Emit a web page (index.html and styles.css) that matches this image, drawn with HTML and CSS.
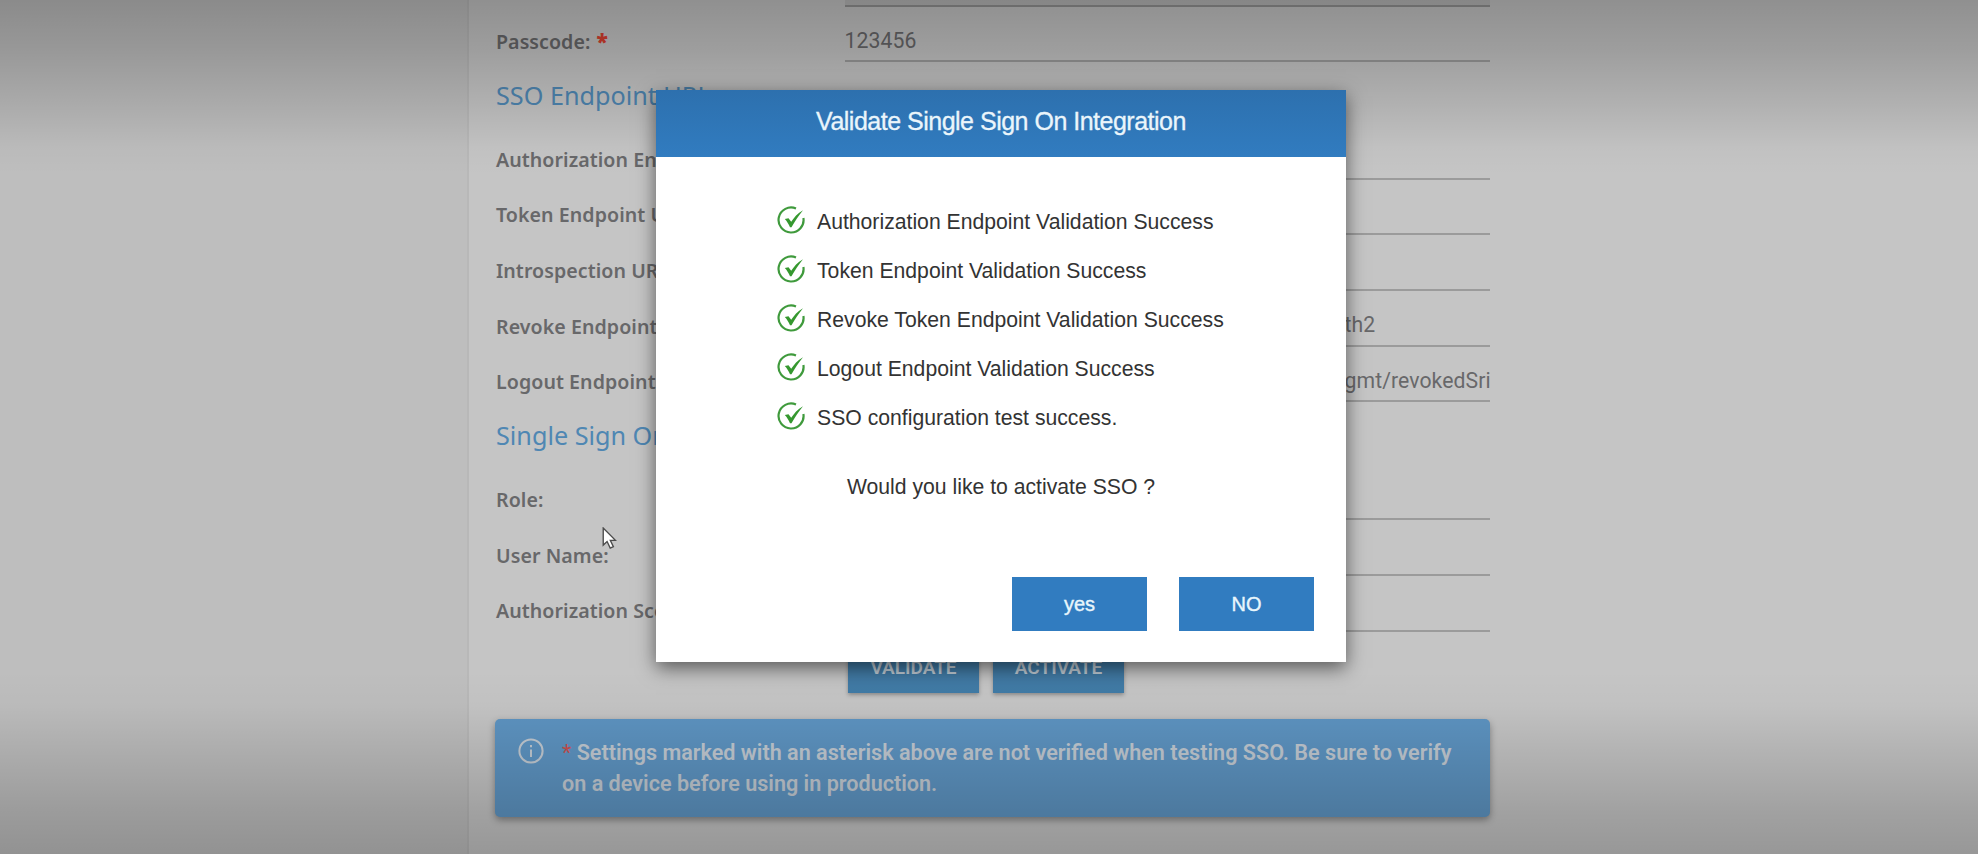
FILE: index.html
```html
<!DOCTYPE html>
<html lang="en">
<head>
<meta charset="utf-8">
<title>Single Sign On Settings</title>
<link rel="stylesheet" href="styles.css">
</head>
<body>
<div class="page">
  <main class="settings">
    <div class="row row-clipped"><span class="label"></span><span class="field field-disabled"></span></div>
    <div class="row row-passcode"><span class="label">Passcode: <b class="required">*</b></span><span class="field digits">123456</span></div>
    <h2 class="heading">SSO Endpoint URL</h2>
    <div class="row"><span class="label">Authorization Endpoint:</span><span class="field"></span></div>
    <div class="row"><span class="label">Token Endpoint URL:</span><span class="field"></span></div>
    <div class="row"><span class="label">Introspection URL:</span><span class="field"></span></div>
    <div class="row"><span class="label">Revoke Endpoint:</span><span class="field"><span class="tail">th2</span></span></div>
    <div class="row"><span class="label">Logout Endpoint:</span><span class="field"><span class="tail">gmt/revokedSri</span></span></div>
    <h2 class="heading">Single Sign On</h2>
    <div class="row"><span class="label">Role:</span><span class="field"></span></div>
    <div class="row"><span class="label">User Name:</span><span class="field"></span></div>
    <div class="row"><span class="label">Authorization Scope:</span><span class="field"></span></div>
    <div class="actions"><button class="raised">VALIDATE</button><button class="raised">ACTIVATE</button></div>
    <div class="notice">
      <svg class="info" viewBox="0 0 26 26"><circle cx="13" cy="13" r="11.6"/><path d="M13 11.5v7.5M13 7v2.2"/></svg>
      <p><span class="line"><i class="star">*</i> Settings marked with an asterisk above are not verified when testing SSO. Be sure to verify</span><span class="line">on a device before using in production.</span></p>
    </div>
  </main>
  <svg class="cursor" viewBox="0 0 14 22"><path d="M1 1v16.3l3.7-3.4 3 6.3 3-1.4-2.9-6h4.9z"/></svg>
  <div class="shade"></div>
  <section class="dialog">
    <header class="dialog-title"><span>Validate Single Sign On Integration</span></header>
    <ul class="checks">
      <li><svg class="tick" viewBox="0 0 28 28"><path class="ring" d="M19 2.500A12.500 12.500 0 1 0 26.400 12"/><path class="mark" d="M7.800 12.900l3.700-.6 2.700 3.500C17 11.500 20.500 7.300 26 4.200 22 9.200 17.600 15.500 14.500 21.200H13C11.800 18.200 10 15.200 7.800 12.900z"/></svg><span>Authorization Endpoint Validation Success</span></li>
      <li><svg class="tick" viewBox="0 0 28 28"><path class="ring" d="M19 2.500A12.500 12.500 0 1 0 26.400 12"/><path class="mark" d="M7.800 12.900l3.700-.6 2.700 3.500C17 11.500 20.500 7.300 26 4.200 22 9.200 17.600 15.500 14.500 21.200H13C11.800 18.200 10 15.200 7.800 12.900z"/></svg><span>Token Endpoint Validation Success</span></li>
      <li><svg class="tick" viewBox="0 0 28 28"><path class="ring" d="M19 2.500A12.500 12.500 0 1 0 26.400 12"/><path class="mark" d="M7.800 12.900l3.700-.6 2.700 3.500C17 11.500 20.500 7.300 26 4.200 22 9.200 17.600 15.500 14.500 21.200H13C11.800 18.200 10 15.200 7.800 12.900z"/></svg><span>Revoke Token Endpoint Validation Success</span></li>
      <li><svg class="tick" viewBox="0 0 28 28"><path class="ring" d="M19 2.500A12.500 12.500 0 1 0 26.400 12"/><path class="mark" d="M7.800 12.900l3.700-.6 2.700 3.500C17 11.500 20.500 7.300 26 4.200 22 9.200 17.600 15.500 14.500 21.200H13C11.800 18.200 10 15.200 7.800 12.900z"/></svg><span>Logout Endpoint Validation Success</span></li>
      <li><svg class="tick" viewBox="0 0 28 28"><path class="ring" d="M19 2.500A12.500 12.500 0 1 0 26.400 12"/><path class="mark" d="M7.800 12.900l3.700-.6 2.700 3.500C17 11.500 20.500 7.300 26 4.200 22 9.200 17.600 15.500 14.500 21.200H13C11.800 18.200 10 15.200 7.800 12.900z"/></svg><span>SSO configuration test success.</span></li>
    </ul>
    <p class="question">Would you like to activate SSO ?</p>
    <footer class="dialog-actions"><button class="flat">yes</button><button class="flat">NO</button></footer>
  </section>
</div>
</body>
</html>
```

FILE: styles.css
```css
* { box-sizing: border-box; }
body { margin: 0; background: #bebebe; }
button { border: 0; padding: 0; }

.page {
  position: relative;
  width: 1978px;
  height: 854px;
  overflow: hidden;
  padding-left: 467px;
  background: #bebebe;
}

.settings {
  height: 854px;
  padding-left: 27px;
  background: #c5c5c5;
  border-left: 2px solid #b8b8b8;
  font-family: "Noto Sans", sans-serif;
}

.row {
  display: grid;
  grid-template-columns: 348.5px 645.5px;
  height: 55.7px;
}
.row-clipped { height: 7px; }
.row-passcode { height: 55px; }
.label {
  font-size: 19.6px;
  font-weight: 600;
  letter-spacing: .06px;
  line-height: 28px;
  padding-top: 21.6px;
  color: #68686a;
  white-space: nowrap;
}
.row-passcode .label { padding-top: 21px; }
.row-clipped .label { padding: 0; }
.required { color: #d8402f; margin-left: 1px; font-size: 21px; line-height: 20px; }
.field {
  border-bottom: 2px solid #9b9b9b;
  font: 400 21.2px/28px Roboto, sans-serif;
  padding-top: 20px;
  color: #68686a;
  overflow: hidden;
  white-space: nowrap;
}
.field-disabled { padding: 0; background: #b8b8b8; border-bottom-color: #929292; }
.digits { padding-top: 19.5px; letter-spacing: .1px; }
.tail { margin-left: 500px; letter-spacing: .08px; }

.heading {
  margin: 0;
  height: 62px;
  padding-top: 15.5px;
  font-size: 25.2px;
  font-weight: 400;
  line-height: 34px;
  color: #4f87b3;
}

.actions { display: flex; gap: 14px; padding: 7.5px 0 0 352px; height: 61.8px; }
.raised {
  width: 131px;
  height: 54px;
  background: #417ba6;
  color: #c1cdd6;
  font: 600 19px/58px Roboto, sans-serif;
  box-shadow: 0 2px 4px rgba(0, 0, 0, .3);
}

.notice {
  display: flex;
  width: 995px;
  height: 97.5px;
  margin: 26px 0 0 -1px;
  padding: 19px 0 0 23px;
  gap: 18px;
  border-radius: 5px;
  background: #5e95c3;
  box-shadow: 0 3px 7px rgba(0, 0, 0, .34);
}
.notice p { margin: 0; font: 600 21.6px/30.2px Roboto, sans-serif; color: #c3cbd3; white-space: nowrap; }
.line { display: block; }
.star { color: #c9504f; font-style: normal; font-weight: 400; }
.info { width: 26px; height: 26px; fill: none; stroke: #c3cbd3; stroke-width: 2; }

.cursor { position: absolute; left: 601.5px; top: 526.5px; width: 15px; height: 23px; fill: #fff; stroke: #4b4b4b; stroke-width: 1.3; }

.shade {
  position: absolute;
  inset: 0;
  background: linear-gradient(to bottom, rgba(0, 0, 0, .27) 0, rgba(0, 0, 0, .2) 50px, rgba(0, 0, 0, .1) 105px, rgba(0, 0, 0, .02) 148px, transparent 175px, transparent 670px, rgba(0, 0, 0, .02) 705px, rgba(0, 0, 0, .09) 750px, rgba(0, 0, 0, .18) 810px, rgba(0, 0, 0, .23) 854px);
}

.dialog {
  position: absolute;
  left: 656px;
  top: 90px;
  width: 690px;
  height: 572px;
  background: #fff;
  box-shadow: 0 6px 18px rgba(0, 0, 0, .55);
  font-family: "Liberation Sans", Arial, sans-serif;
  color: #333;
}
.dialog-title {
  height: 66.5px;
  background: linear-gradient(#2d70ae, #317cc0);
  color: #eaf5fb;
  font-size: 25px;
  letter-spacing: -.5px;
  line-height: 63px;
  text-align: center;
  -webkit-text-stroke: .3px #eaf5fb;
}
.checks { list-style: none; margin: 0; padding: 39px 0 0 120.5px; font-size: 21.2px; }
.checks li { display: flex; align-items: center; gap: 12.5px; height: 49.1px; white-space: nowrap; }
.checks span { padding-top: 3px; }
.tick { width: 28px; height: 28px; }
.ring { fill: none; stroke: #3f9a3c; stroke-width: 2.2; }
.mark { fill: #35982f; }
.question { margin: 32px 0 0; font-size: 21.2px; line-height: 28px; text-align: center; }
.dialog-actions { display: flex; justify-content: flex-end; gap: 32px; padding: 76px 32px 0 0; }
.flat { width: 135px; height: 54px; background: #317cc0; color: #e8f6fc; font: 400 20px/52px "Liberation Sans", Arial, sans-serif; -webkit-text-stroke: .4px #e8f6fc; }
```
